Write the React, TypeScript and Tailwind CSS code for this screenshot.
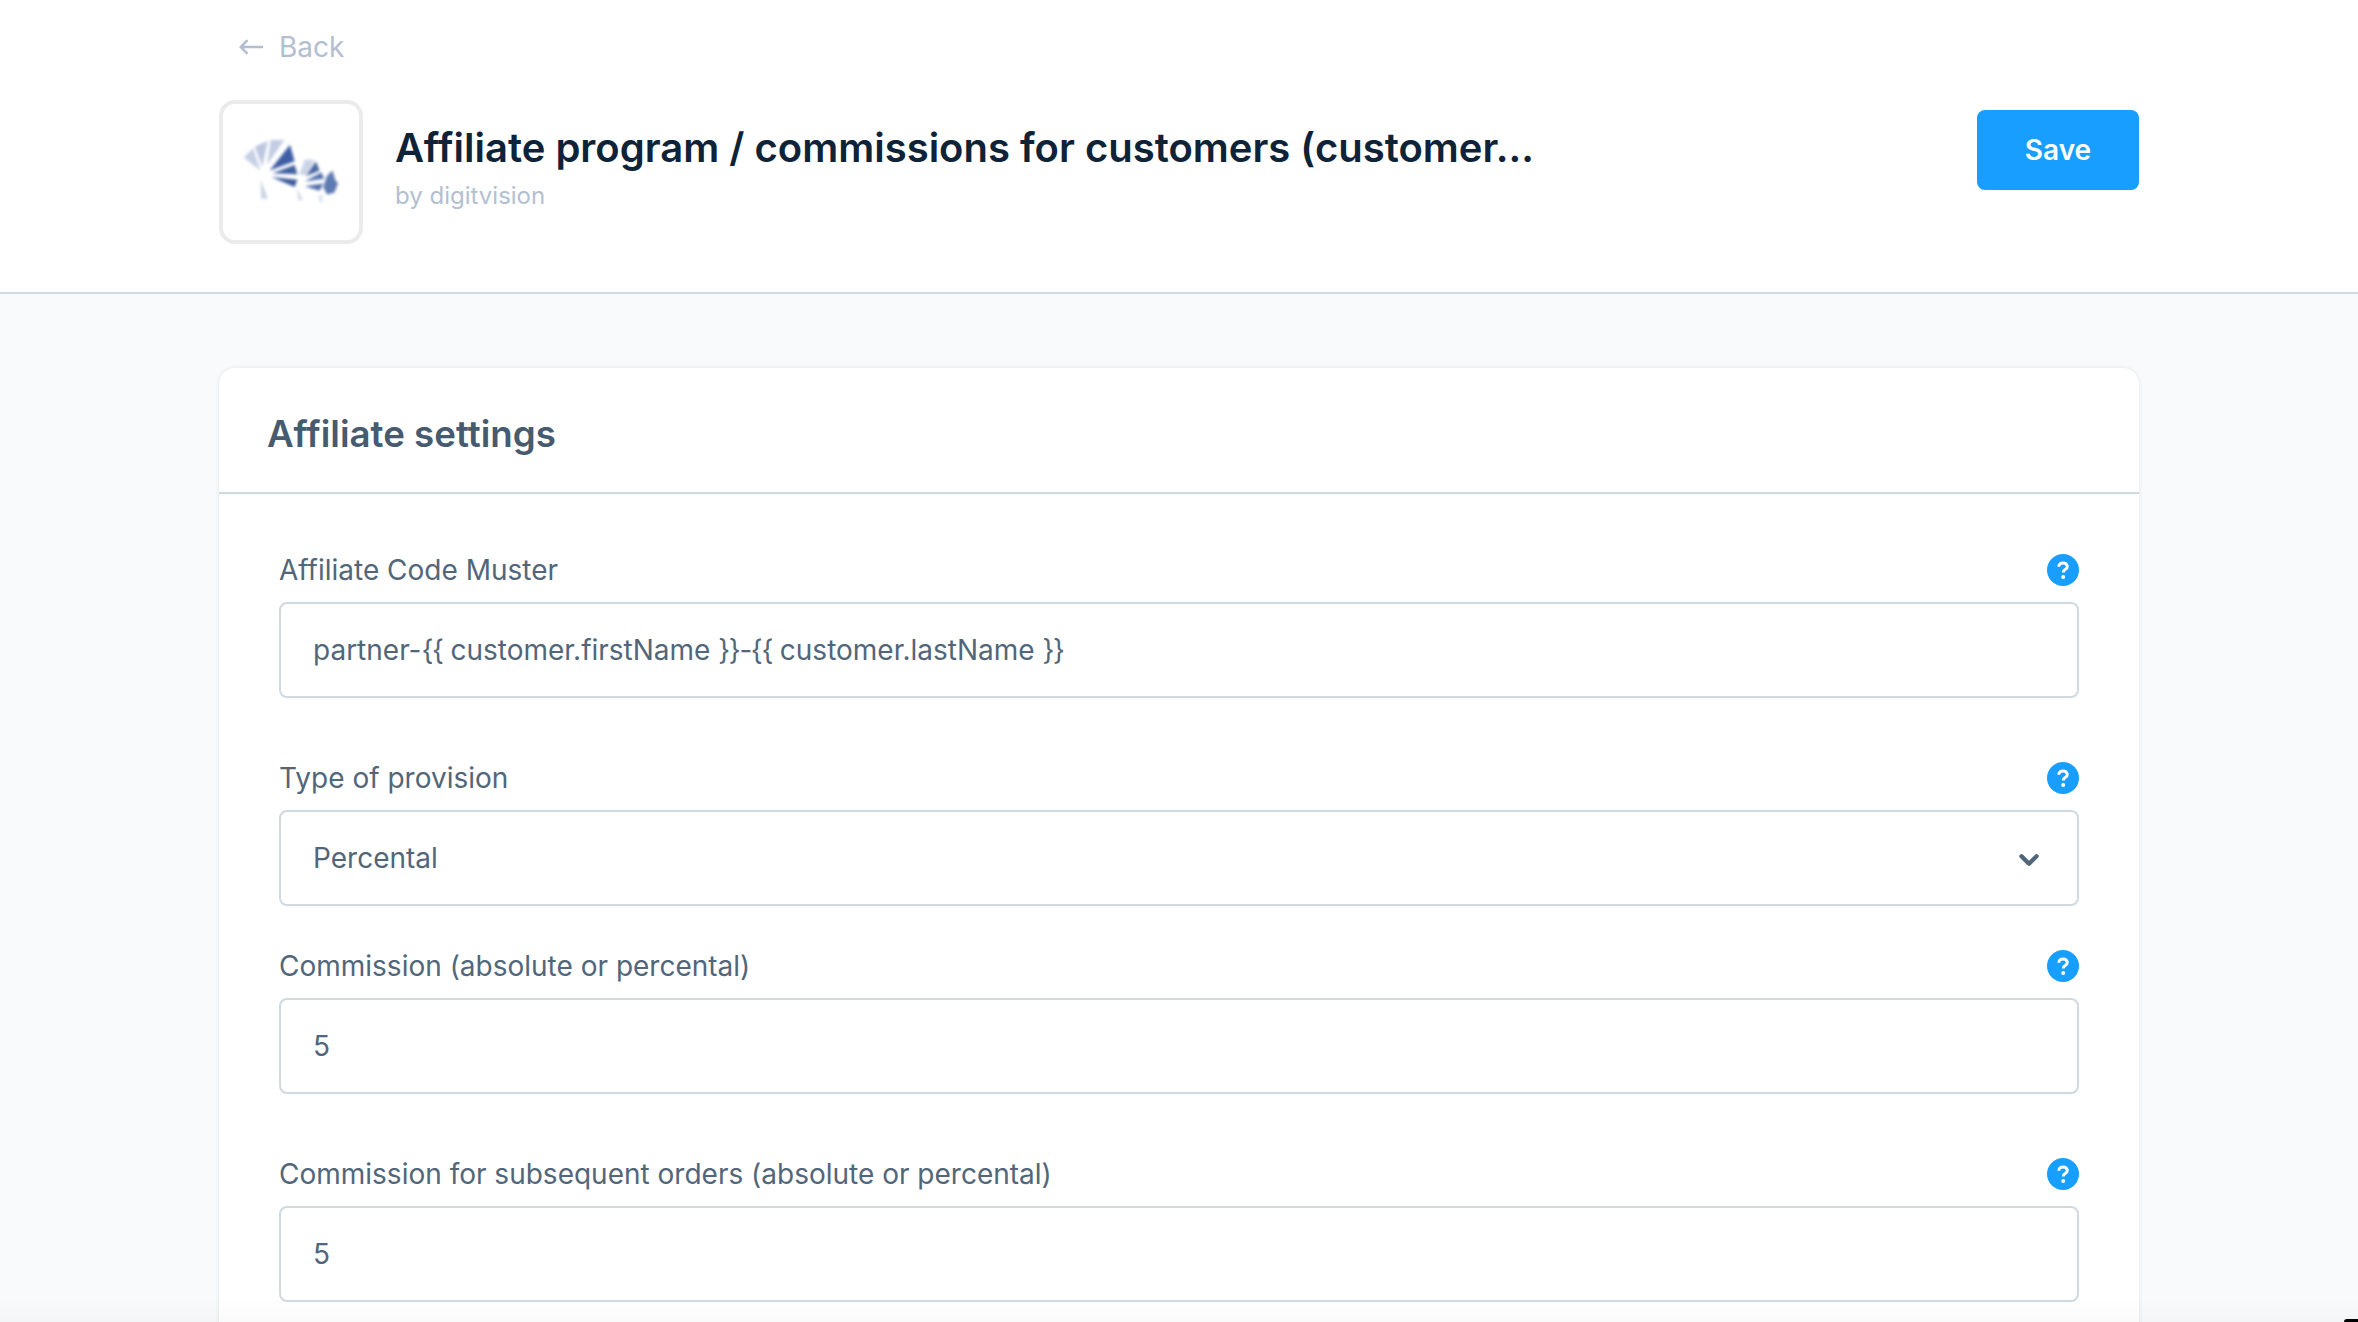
import type { ReactNode } from "react";
import { ChevronDown } from "lucide-react";

const font = "font-['Inter',sans-serif]";

function HelpIcon() {
  return (
    <span className="w-[32px] h-[32px] rounded-full bg-[#189eff] flex items-center justify-center">
      <svg width="32" height="32" viewBox="0 0 32 32" fill="none">
        <path
          d="M11.8 12.8c0-2.4 1.9-3.9 4.3-3.9 2.4 0 4.2 1.4 4.2 3.5 0 1.6-.9 2.4-2.1 3.2-1.2.8-1.9 1.3-1.9 2.8"
          stroke="#fff"
          strokeWidth="3"
        />
        <circle cx="16.2" cy="23" r="2" fill="#fff" />
      </svg>
    </span>
  );
}

function Logo() {
  return (
    <svg width="96" height="67" viewBox="0 0 104 72" className="blur-[1.5px] mr-[3px] mb-[4px]">
      <path d="M20 36 L2 22 L12 12 Z" fill="#c5cfe4" />
      <path d="M22 32 L14 10 L28 4 Z" fill="#bcc7e0" />
      <path d="M27 30 L31 3 L46 3 Z" fill="#c3cde3" />
      <path d="M30 36 L52 8 L57 26 Z" fill="#3f5ea3" />
      <path d="M33 39 L57 30 L60 40 Z" fill="#40609f" />
      <path d="M32 43 L60 46 L57 54 Z" fill="#3d5b9f" />
      <path d="M20 46 L28 66 L21 67 Z" fill="#c9d3e6" />
      <path d="M62 40 L68 24 L78 24 L72 42 Z" fill="#ccd5e7" />
      <path d="M70 42 L80 26 L84 36 Z" fill="#47659f" />
      <path d="M68 48 L86 38 L89 45 Z" fill="#5572ad" />
      <path d="M68 53 L88 50 L84 58 Z" fill="#4f6caa" />
      <path d="M60 56 L66 68 L61 68 Z" fill="#ccd5e7" />
      <path d="M92 42 L98 36 L101 46 L104 50 L100 60 L92 62 L88 54 Z" fill="#5e7ab2" />
      <path d="M82 64 L87 62 L88 70 L84 70 Z" fill="#dde3ef" />
    </svg>
  );
}

function Braces({ children }: { children: string }) {
  return <span className="tracking-[-1.4px]">{children}</span>;
}

function Field({ label, value, select }: { label: string; value: ReactNode; select?: boolean }) {
  return (
    <div>
      <div className="h-[32px] mb-[16px] flex items-center justify-between">
        <label className="text-[28px] text-[#52667a] leading-[32px]">{label}</label>
        <HelpIcon />
      </div>
      <div className="h-[96px] border-2 border-[#d1d9e0] rounded-[8px] px-[32px] flex items-center justify-between bg-white">
        <span className="text-[28px] text-[#52667a]">{value}</span>
        {select && <ChevronDown className="w-[30px] h-[30px] text-[#52667a] mr-[1px] mt-[3px]" strokeWidth={3.5} />}
      </div>
    </div>
  );
}

export default function App() {
  return (
    <div className={`${font} relative h-[1322px] overflow-hidden bg-[#f9fafb]`}>
      <header className="h-[294px] bg-white border-b-2 border-[#d1d9e0]">
        <div className="w-[1920px] ml-[219px]">
          <div className="h-[94px] pl-[20px] flex items-center gap-[16px] text-[#b3bfd1]">
            <svg width="24" height="16" viewBox="0 0 24 16" fill="none" stroke="currentColor" strokeWidth="2.5">
              <path d="M24 8H2M8.5 1.2 1.8 8l6.7 6.8" />
            </svg>
            <span className="text-[28px]">Back</span>
          </div>
          <div className="flex items-start">
            <div className="w-[144px] h-[144px] mt-[6px] border-[4px] border-[#ebebeb] rounded-[16px] bg-white flex items-center justify-center shrink-0">
              <Logo />
            </div>
            <div className="ml-[32px] mt-[30px] flex-1 min-w-0">
              <h1 className="text-[40px] leading-[48px] font-semibold text-[#0f2338] whitespace-nowrap">
                Affiliate program / commissions for customers (customer…
              </h1>
              <p className="mt-[9px] text-[24px] leading-[30px] text-[#b3bfd1]">by digitvision</p>
            </div>
            <button className="mt-[16px] w-[162px] h-[80px] rounded-[8px] bg-[#189eff] text-white text-[28px] font-semibold">
              Save
            </button>
          </div>
        </div>
      </header>

      <main className="w-[1920px] ml-[219px] mt-[74px] bg-white rounded-t-[16px] shadow-[0_0_4px_rgba(0,0,0,0.1)]">
        <div className="h-[126px] px-[48px] pt-[8px] flex items-center border-b-2 border-[#d1d9e0]">
          <h2 className="text-[36.7px] font-semibold text-[#465a70]">Affiliate settings</h2>
        </div>
        <div className="px-[60px] pt-[60px] pb-[60px]">
          <div className="mb-[64px]">
            <Field
              label="Affiliate Code Muster"
              value={
                <>
                  partner-<Braces>{"{{"}</Braces> customer.firstName <Braces>{"}}-{{"}</Braces> customer.lastName{" "}
                  <Braces>{"}}"}</Braces>
                </>
              }
            />
          </div>
          <div className="mb-[44px]">
            <Field label="Type of provision" value="Percental" select />
          </div>
          <div className="mb-[64px]">
            <Field label="Commission (absolute or percental)" value="5" />
          </div>
          <Field label="Commission for subsequent orders (absolute or percental)" value="5" />
        </div>
      </main>

      <div className="absolute bottom-0 left-0 right-0 h-[24px] bg-gradient-to-b from-transparent to-[rgba(0,0,0,0.02)]" />
      <div className="absolute bottom-0 right-0 w-[14px] h-[3px] bg-black rounded-tl-[6px]" />
    </div>
  );
}
